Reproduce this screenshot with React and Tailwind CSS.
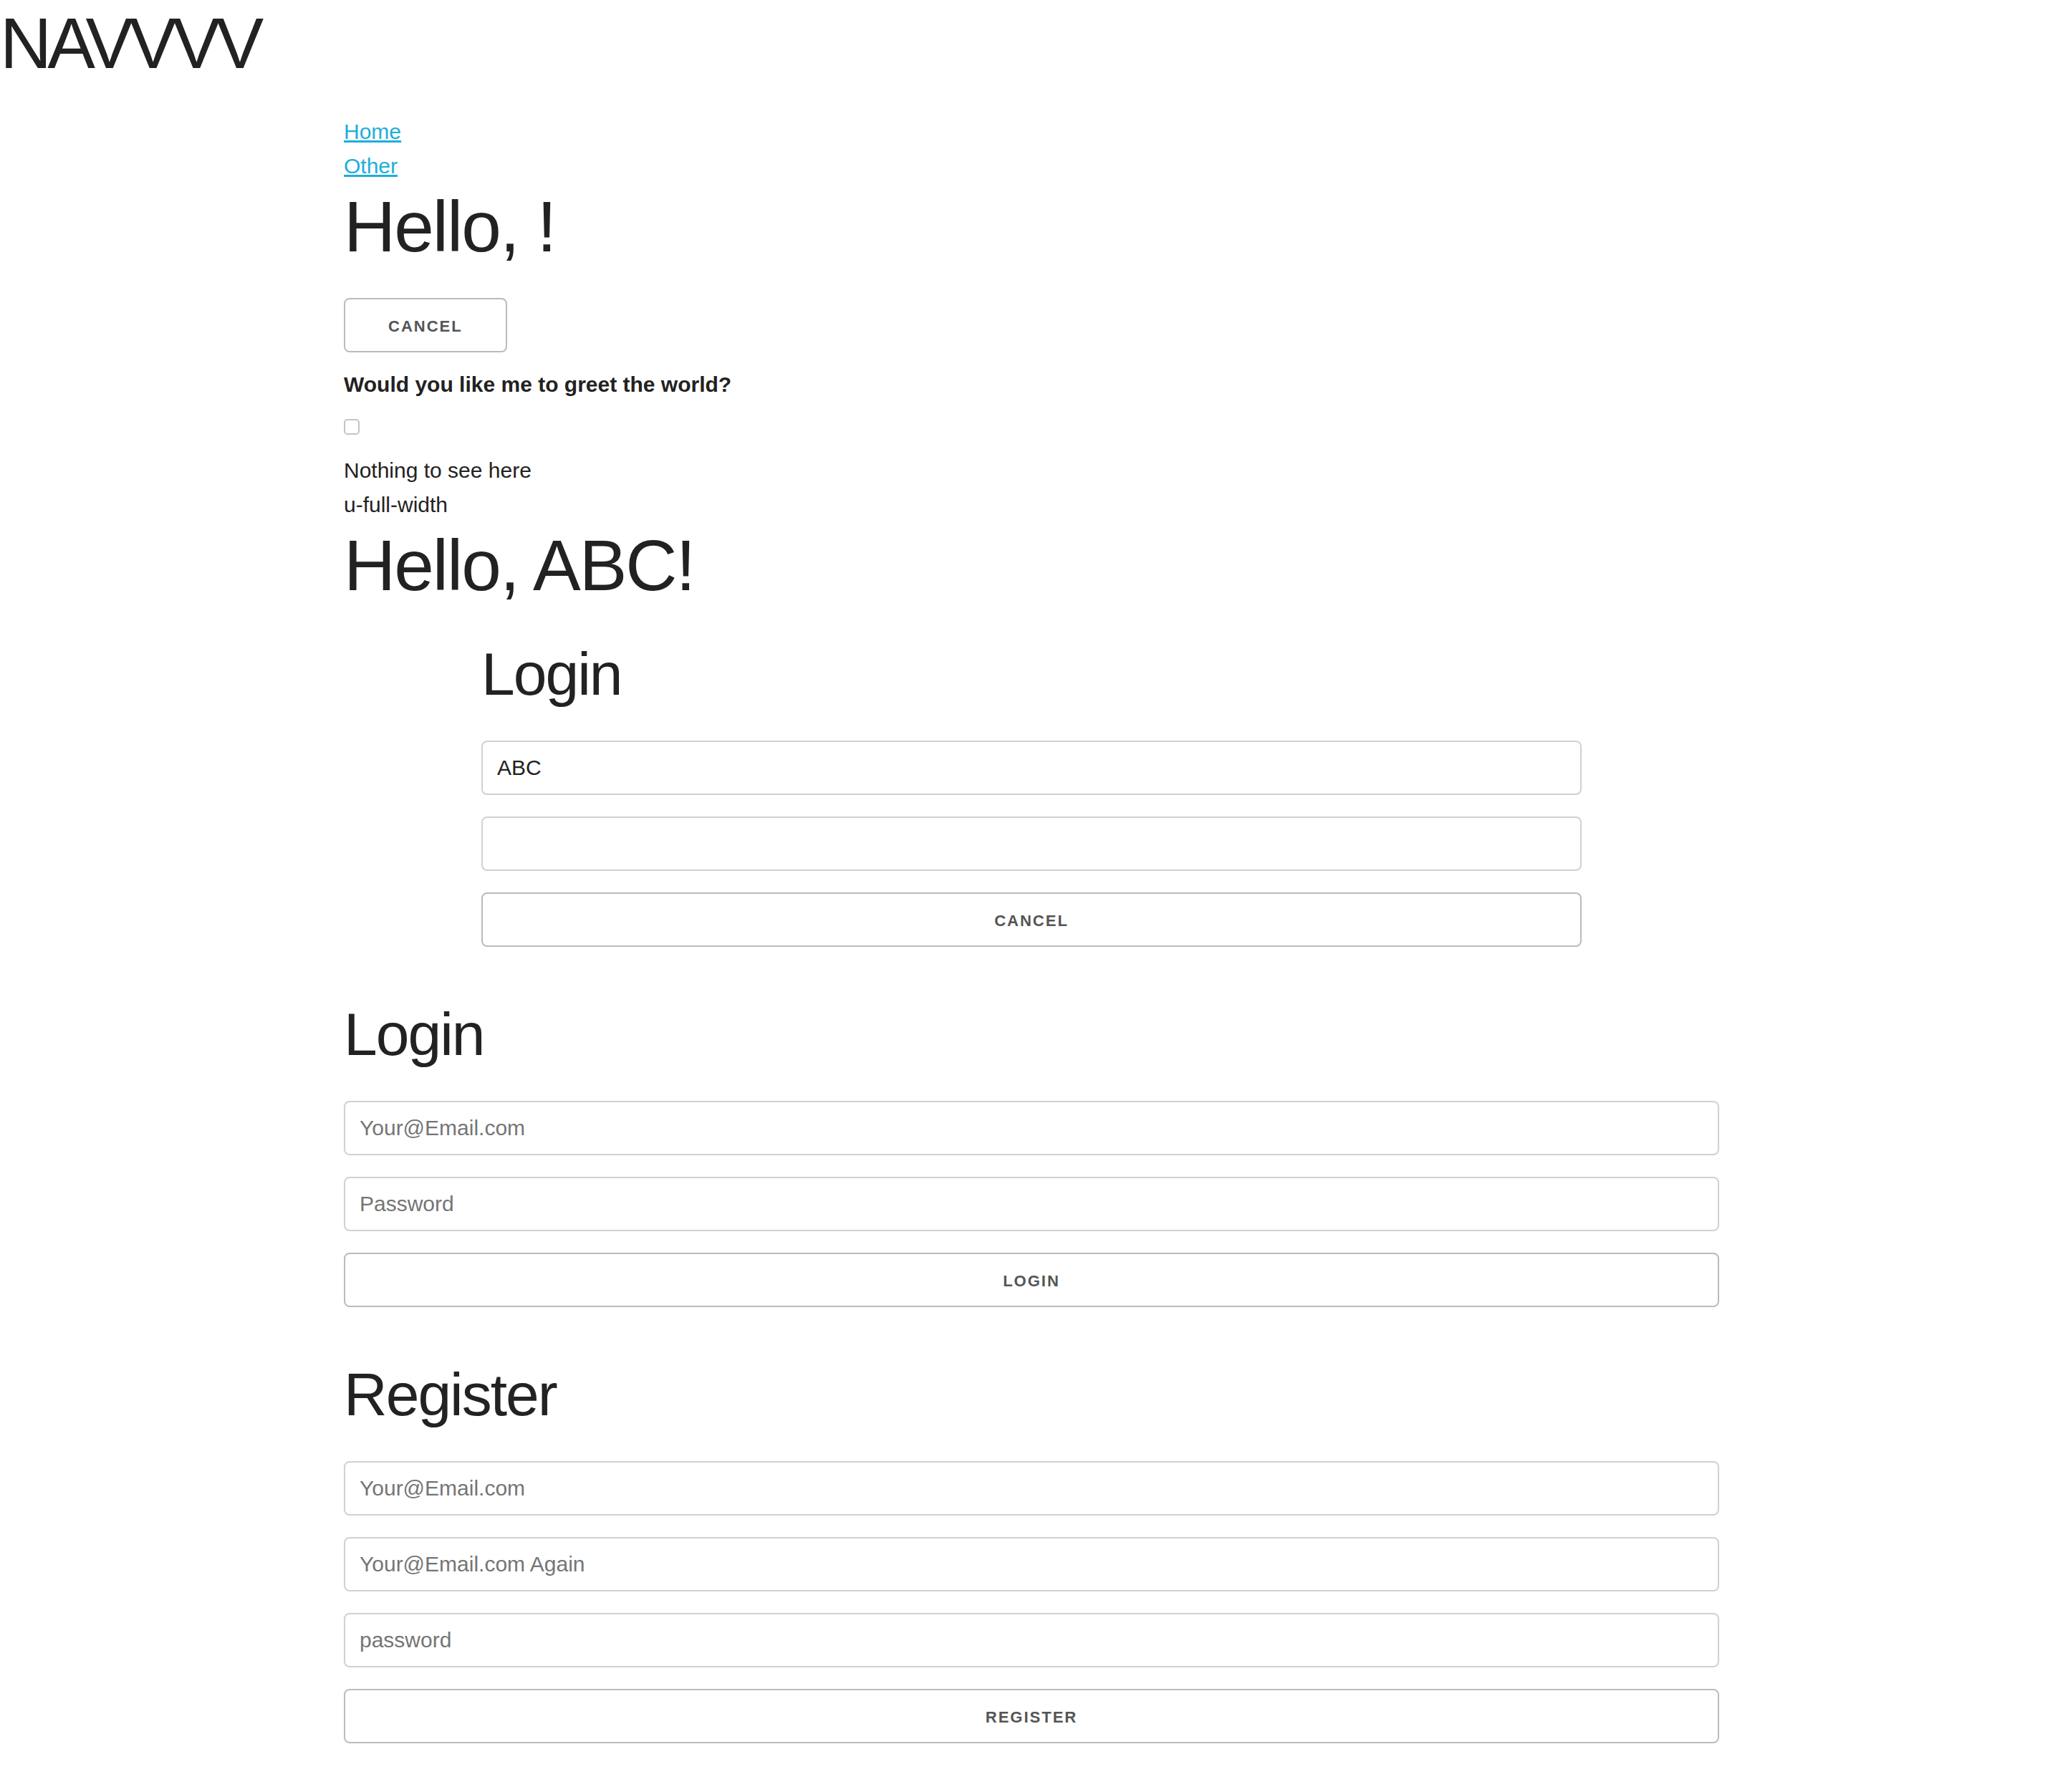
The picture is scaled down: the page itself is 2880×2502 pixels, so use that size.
import React from 'react'

const inputClass =
  'block w-full h-[76px] px-[20px] py-[12px] mb-[30px] bg-white border-2 border-[#d1d1d1] rounded-[8px] text-[30px] text-[#222] placeholder:text-[#757575] outline-none'

const buttonClass =
  'h-[76px] px-[60px] mb-[20px] bg-transparent border-2 border-[#bbb] rounded-[8px] text-[22px] leading-[76px] font-bold tracking-[2px] uppercase text-[#555] whitespace-nowrap text-center cursor-pointer'

const Heading = ({ children, className = '' }) => (
  <h1 className={`text-[100px] leading-[120px] font-normal mb-[40px] ${className}`}>{children}</h1>
)

const SubHeading = ({ children }) => (
  <h2 className="text-[84px] leading-[105px] tracking-[-2px] font-normal mb-[40px]">{children}</h2>
)

const App = () => {
  return (
    <div className="min-h-screen bg-white text-[#222] text-[30px] leading-[48px] font-['Liberation_Sans',Arial,sans-serif]">
      <Heading className="tracking-[-6px]">NAVVVV</Heading>

      <div className="mx-auto w-[1920px] flex flex-col items-start">
        <a href="#" className="text-[#1EAEDB] underline">Home</a>
        <a href="#" className="text-[#1EAEDB] underline">Other</a>

        <Heading className="tracking-[-2px]">Hello, !</Heading>

        <button type="button" className={buttonClass}>Cancel</button>

        <label className="block font-bold mb-[10px] mt-[1px]">Would you like me to greet the world?</label>
        <div className="h-[62px] pt-[14px]">
          <input
            type="checkbox"
            className="appearance-none block m-0 w-[22px] h-[22px] bg-white border-2 border-[#c4c4c4] rounded-[5px]"
          />
        </div>
        <div>Nothing to see here</div>
        <div>u-full-width</div>

        <Heading className="tracking-[-2px]">Hello, ABC!</Heading>

        <form className="mx-auto w-[1536px] mb-[50px]" onSubmit={(e) => e.preventDefault()}>
          <SubHeading>Login</SubHeading>
          <input type="text" defaultValue="ABC" className={inputClass} />
          <input type="password" className={inputClass} />
          <button type="button" className={`${buttonClass} block w-full`}>Cancel</button>
        </form>

        <form className="w-full mb-[50px]" onSubmit={(e) => e.preventDefault()}>
          <SubHeading>Login</SubHeading>
          <input type="email" placeholder="Your@Email.com" className={inputClass} />
          <input type="password" placeholder="Password" className={inputClass} />
          <button type="submit" className={`${buttonClass} block w-full`}>Login</button>
        </form>

        <form className="w-full mb-[50px]" onSubmit={(e) => e.preventDefault()}>
          <SubHeading>Register</SubHeading>
          <input type="email" placeholder="Your@Email.com" className={inputClass} />
          <input type="email" placeholder="Your@Email.com Again" className={inputClass} />
          <input type="password" placeholder="password" className={inputClass} />
          <button type="submit" className={`${buttonClass} block w-full`}>Register</button>
        </form>
      </div>
    </div>
  )
}

export default App
